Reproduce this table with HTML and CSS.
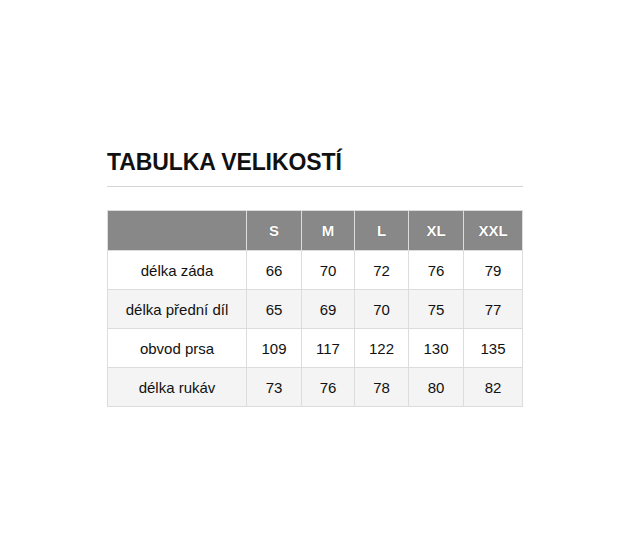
FILE: index.html
```html
<!DOCTYPE html>
<html lang="cs">
<head>
<meta charset="utf-8">
<link rel="stylesheet" href="styles.css">
</head>
<body>
<div class="page">
  <h1 class="title">TABULKA VELIKOSTÍ</h1>
  <div class="rule"></div>
  <table class="sizes">
    <thead>
      <tr><th class="label"></th><th>S</th><th>M</th><th>L</th><th>XL</th><th>XXL</th></tr>
    </thead>
    <tbody>
      <tr><td class="label">délka záda</td><td>66</td><td>70</td><td>72</td><td>76</td><td>79</td></tr>
      <tr class="alt"><td class="label">délka přední díl</td><td>65</td><td>69</td><td>70</td><td>75</td><td>77</td></tr>
      <tr><td class="label">obvod prsa</td><td>109</td><td>117</td><td>122</td><td>130</td><td>135</td></tr>
      <tr class="alt"><td class="label">délka rukáv</td><td>73</td><td>76</td><td>78</td><td>80</td><td>82</td></tr>
    </tbody>
  </table>
</div>
</body>
</html>
```
FILE: styles.css
```css
html, body {
  margin: 0;
  padding: 0;
  background: #ffffff;
}
body {
  font-family: "Liberation Sans", Arial, sans-serif;
  color: #111;
}
.page {
  padding: 147px 0 0 107px;
  width: 416px;
}
.title {
  margin: 0;
  font-size: 23px;
  line-height: 30px;
  font-weight: bold;
  letter-spacing: -0.1px;
  color: #111;
}
.rule {
  margin-top: 9px;
  height: 1px;
  background: #d4d4d4;
  width: 416px;
}
.sizes {
  margin-top: 23px;
  border-collapse: collapse;
  width: 416px;
  table-layout: fixed;
}
.sizes th, .sizes td {
  border: 1px solid #dcdcdc;
  text-align: center;
  padding: 0;
}
.sizes th {
  background: #888888;
  color: #fff;
  font-size: 15px;
  font-weight: bold;
  height: 39px;
  text-shadow: 0 0 1px rgba(0,0,0,0.4);
}
.sizes th.label { width: 138px; }
.sizes th:nth-child(2) { width: 54px; }
.sizes th:nth-child(3) { width: 52px; }
.sizes th:nth-child(4) { width: 53px; }
.sizes th:nth-child(5) { width: 54px; }
.sizes td {
  font-size: 15px;
  height: 38px;
  background: #fff;
  color: #111;
}
.sizes tr.alt td {
  background: #f4f4f4;
}
```
